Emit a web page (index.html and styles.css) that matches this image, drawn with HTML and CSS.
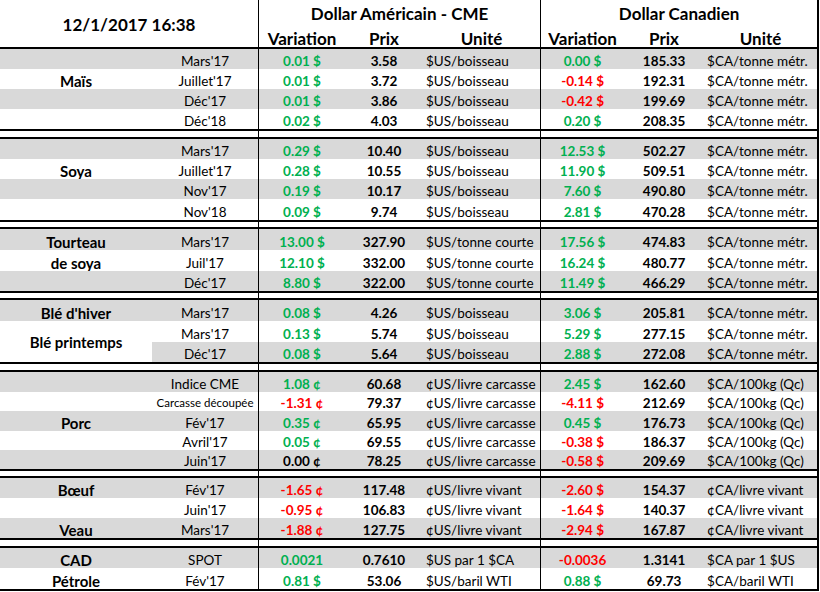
FILE: index.html
```html
<!DOCTYPE html>
<html lang="fr">
<head>
<meta charset="utf-8">
<title>Prix des grains et du bétail</title>
<link rel="stylesheet" href="styles.css">
</head>
<body>
<table class="sheet">
<colgroup>
<col class="ca"><col class="cb"><col class="cc"><col class="cd"><col class="ce"><col class="cf"><col class="cg"><col class="ch">
</colgroup>
<thead>
<tr class="h1">
<th class="title" rowspan="2" colspan="2">12/1/2017 16:38</th>
<th class="grp bl" colspan="3">Dollar Américain - CME</th>
<th class="grp bl" colspan="3">Dollar Canadien</th>
</tr>
<tr class="h2">
<th class="bl">Variation</th><th>Prix</th><th>Unité</th>
<th class="bl">Variation</th><th>Prix</th><th>Unité</th>
</tr>
</thead>
<tbody>
<tr class="g"><td class="c"></td><td class="k">Mars'17</td><td class="v up">0.01 $</td><td class="p">3.58</td><td class="u">$US/boisseau</td><td class="v up">0.00 $</td><td class="p">185.33</td><td class="u">$CA/tonne métr.</td></tr>
<tr><td class="c">Maïs</td><td class="k">Juillet'17</td><td class="v up">0.01 $</td><td class="p">3.72</td><td class="u">$US/boisseau</td><td class="v dn">-0.14 $</td><td class="p">192.31</td><td class="u">$CA/tonne métr.</td></tr>
<tr class="g"><td class="c"></td><td class="k">Déc'17</td><td class="v up">0.01 $</td><td class="p">3.86</td><td class="u">$US/boisseau</td><td class="v dn">-0.42 $</td><td class="p">199.69</td><td class="u">$CA/tonne métr.</td></tr>
<tr><td class="c"></td><td class="k">Déc'18</td><td class="v up">0.02 $</td><td class="p">4.03</td><td class="u">$US/boisseau</td><td class="v up">0.20 $</td><td class="p">208.35</td><td class="u">$CA/tonne métr.</td></tr>
<tr class="sep"><td colspan="2"></td><td colspan="3" class="bl"></td><td colspan="3" class="bl"></td></tr>

<tr class="g"><td class="c"></td><td class="k">Mars'17</td><td class="v up">0.29 $</td><td class="p">10.40</td><td class="u">$US/boisseau</td><td class="v up">12.53 $</td><td class="p">502.27</td><td class="u">$CA/tonne métr.</td></tr>
<tr><td class="c">Soya</td><td class="k">Juillet'17</td><td class="v up">0.28 $</td><td class="p">10.55</td><td class="u">$US/boisseau</td><td class="v up">11.90 $</td><td class="p">509.51</td><td class="u">$CA/tonne métr.</td></tr>
<tr class="g"><td class="c"></td><td class="k">Nov'17</td><td class="v up">0.19 $</td><td class="p">10.17</td><td class="u">$US/boisseau</td><td class="v up">7.60 $</td><td class="p">490.80</td><td class="u">$CA/tonne métr.</td></tr>
<tr class="h21"><td class="c"></td><td class="k">Nov'18</td><td class="v up">0.09 $</td><td class="p">9.74</td><td class="u">$US/boisseau</td><td class="v up">2.81 $</td><td class="p">470.28</td><td class="u">$CA/tonne métr.</td></tr>
<tr class="sep s9"><td colspan="2"></td><td colspan="3" class="bl"></td><td colspan="3" class="bl"></td></tr>

<tr class="g h21"><td class="c">Tourteau</td><td class="k">Mars'17</td><td class="v up">13.00 $</td><td class="p">327.90</td><td class="u">$US/tonne courte</td><td class="v up">17.56 $</td><td class="p">474.83</td><td class="u">$CA/tonne métr.</td></tr>
<tr class="h21"><td class="c">de soya</td><td class="k">Juil'17</td><td class="v up">12.10 $</td><td class="p">332.00</td><td class="u">$US/tonne courte</td><td class="v up">16.24 $</td><td class="p">480.77</td><td class="u">$CA/tonne métr.</td></tr>
<tr class="g"><td class="c"></td><td class="k">Déc'17</td><td class="v up">8.80 $</td><td class="p">322.00</td><td class="u">$US/tonne courte</td><td class="v up">11.49 $</td><td class="p">466.29</td><td class="u">$CA/tonne métr.</td></tr>
<tr class="sep s9"><td colspan="2"></td><td colspan="3" class="bl"></td><td colspan="3" class="bl"></td></tr>

<tr class="g h21"><td class="c">Blé d'hiver</td><td class="k">Mars'17</td><td class="v up">0.08 $</td><td class="p">4.26</td><td class="u">$US/boisseau</td><td class="v up">3.06 $</td><td class="p">205.81</td><td class="u">$CA/tonne métr.</td></tr>
<tr class="h21"><td class="c mid" rowspan="2">Blé printemps</td><td class="k">Mars'17</td><td class="v up">0.13 $</td><td class="p">5.74</td><td class="u">$US/boisseau</td><td class="v up">5.29 $</td><td class="p">277.15</td><td class="u">$CA/tonne métr.</td></tr>
<tr class="g"><td class="k">Déc'17</td><td class="v up">0.08 $</td><td class="p">5.64</td><td class="u">$US/boisseau</td><td class="v up">2.88 $</td><td class="p">272.08</td><td class="u">$CA/tonne métr.</td></tr>
<tr class="sep"><td colspan="2"></td><td colspan="3" class="bl"></td><td colspan="3" class="bl"></td></tr>

<tr class="g"><td class="c"></td><td class="k">Indice CME</td><td class="v up">1.08 ¢</td><td class="p">60.68</td><td class="u">¢US/livre carcasse</td><td class="v up">2.45 $</td><td class="p">162.60</td><td class="u">$CA/100kg (Qc)</td></tr>
<tr class="h19"><td class="c"></td><td class="k small">Carcasse découpée</td><td class="v dn">-1.31 ¢</td><td class="p">79.37</td><td class="u">¢US/livre carcasse</td><td class="v dn">-4.11 $</td><td class="p">212.69</td><td class="u">$CA/100kg (Qc)</td></tr>
<tr class="g"><td class="c">Porc</td><td class="k">Fév'17</td><td class="v up">0.35 ¢</td><td class="p">65.95</td><td class="u">¢US/livre carcasse</td><td class="v up">0.45 $</td><td class="p">176.73</td><td class="u">$CA/100kg (Qc)</td></tr>
<tr class="h19"><td class="c"></td><td class="k">Avril'17</td><td class="v up">0.05 ¢</td><td class="p">69.55</td><td class="u">¢US/livre carcasse</td><td class="v dn">-0.38 $</td><td class="p">186.37</td><td class="u">$CA/100kg (Qc)</td></tr>
<tr class="g h19"><td class="c"></td><td class="k">Juin'17</td><td class="v">0.00 ¢</td><td class="p">78.25</td><td class="u">¢US/livre carcasse</td><td class="v dn">-0.58 $</td><td class="p">209.69</td><td class="u">$CA/100kg (Qc)</td></tr>
<tr class="sep s9"><td colspan="2"></td><td colspan="3" class="bl"></td><td colspan="3" class="bl"></td></tr>

<tr class="g"><td class="c">Bœuf</td><td class="k">Fév'17</td><td class="v dn">-1.65 ¢</td><td class="p">117.48</td><td class="u">¢US/livre vivant</td><td class="v dn">-2.60 $</td><td class="p">154.37</td><td class="u">¢CA/livre vivant</td></tr>
<tr><td class="c"></td><td class="k">Juin'17</td><td class="v dn">-0.95 ¢</td><td class="p">106.83</td><td class="u">¢US/livre vivant</td><td class="v dn">-1.64 $</td><td class="p">140.37</td><td class="u">¢CA/livre vivant</td></tr>
<tr class="g"><td class="c">Veau</td><td class="k">Mars'17</td><td class="v dn">-1.88 ¢</td><td class="p">127.75</td><td class="u">¢US/livre vivant</td><td class="v dn">-2.94 $</td><td class="p">167.87</td><td class="u">¢CA/livre vivant</td></tr>
<tr class="sep"><td colspan="2"></td><td colspan="3" class="bl"></td><td colspan="3" class="bl"></td></tr>

<tr class="g"><td class="c">CAD</td><td class="k">SPOT</td><td class="v up">0.0021</td><td class="p">0.7610</td><td class="u">$US par 1 $CA</td><td class="v dn">-0.0036</td><td class="p">1.3141</td><td class="u">$CA par 1 $US</td></tr>
<tr class="last"><td class="c">Pétrole</td><td class="k">Fév'17</td><td class="v up">0.81 $</td><td class="p">53.06</td><td class="u">$US/baril WTI</td><td class="v up">0.88 $</td><td class="p">69.73</td><td class="u">$CA/baril WTI</td></tr>
</tbody>
</table>
</body>
</html>
```

FILE: styles.css
```css
* { box-sizing: border-box; }
html, body { margin: 0; padding: 0; background: #ffffff; }
body {
  font-family: Lato, "Liberation Sans", sans-serif;
  color: #000000;
}

.sheet {
  border-collapse: separate;
  border-spacing: 0;
  table-layout: fixed;
  width: 819px;
}
.ca { width: 152px; }
.cb { width: 106px; }
.cc { width: 87px; }
.cd { width: 78px; }
.ce { width: 117px; }
.cf { width: 84px; }
.cg { width: 80px; }
.ch { width: 115px; }

th, td {
  padding: 0;
  white-space: nowrap;
  overflow: hidden;
  vertical-align: bottom;
}
tr > :last-child { border-right: 2px solid #000; }
.bl { border-left: 1px solid #000; }

/* header */
th { font-weight: 700; font-size: 17px; text-align: center; }
.h1 th { height: 27px; line-height: 20px; padding-bottom: 3px; }
.h2 th { height: 22px; line-height: 17px; border-bottom: 2px solid #000; }
.h1 th.title {
  vertical-align: middle;
  line-height: 20px;
  padding: 3px 0 0 0;
  border-bottom: 2px solid #000;
}

/* data rows */
td { height: 20px; font-size: 13.5px; line-height: 16px; }
.h21 td { height: 21px; }
.h19 td { height: 19px; }
.g td { background: #d9d9d9; }

.c { font-weight: 700; font-size: 15px; text-align: center; }
.c.mid { vertical-align: middle; background: #ffffff; }
.k { text-align: center; }
.k.small { font-size: 11.5px; }
.v { text-align: center; font-weight: 700; border-left: 1px solid #000; }
.up { color: #00b050; }
.dn { color: #ff0000; }
.p { text-align: center; font-weight: 700; }
.u { text-align: left; padding-left: 3px; }

/* separators */
.sep td {
  height: 10px;
  border-top: 2px solid #000;
  border-bottom: 2px solid #000;
  background: #ffffff;
}
.sep.s9 td { height: 9px; }

.last td { height: 23px; border-bottom: 2px solid #000; }
```
